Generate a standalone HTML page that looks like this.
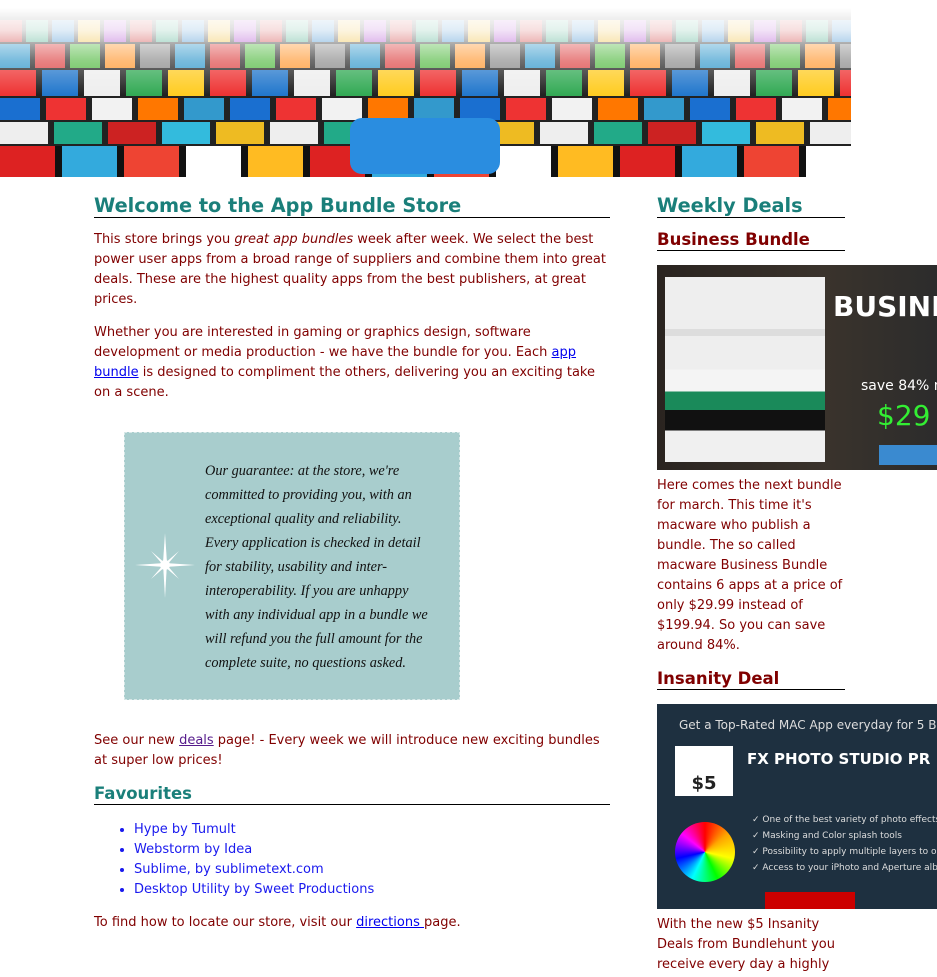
<!DOCTYPE html>
<html><head><meta charset="utf-8"><style>
body{margin:0;background:#fff;font-family:"DejaVu Sans","Liberation Sans",sans-serif;font-size:13px;line-height:20px;color:#800000;width:937px;height:977px;overflow:hidden;position:relative}
.banner{position:absolute;left:0;top:0;width:851px;height:177px;overflow:hidden;background:#222}
.row{position:absolute;left:0;width:851px}
.fade{position:absolute;left:0;top:0;width:851px;height:177px;background:linear-gradient(#fff 0,#fff 8px,rgba(255,255,255,.85) 30px,rgba(255,255,255,.35) 60px,rgba(255,255,255,0) 95px)}
h1{position:absolute;margin:0;font-size:19.3px;font-weight:bold;color:#1a7f7a;border-bottom:1px solid #000;line-height:22px}
h2{position:absolute;margin:0;font-size:16.5px;font-weight:bold;color:#800000;border-bottom:1px solid #000;line-height:21px}
p{position:absolute;margin:0;left:94px;width:518px}
a{color:#0000ee}
.box{position:absolute;left:124px;top:432px;width:334px;height:266px;background:#a8cdcd;border:1px dashed #d8e8e8}
.box div{position:absolute;left:80px;top:26px;width:260px;font-family:"Liberation Serif",serif;font-style:italic;font-size:14.3px;line-height:24px;color:#111;white-space:nowrap}
ul{position:absolute;left:94px;top:820px;margin:0;padding-left:40px;color:#1a1aee}
li{line-height:20px}
.side{left:657px;width:188px}
</style></head><body>
<div class="banner">
<div class="row" style="top:20px;height:22px;background:repeating-linear-gradient(90deg,#c33 0 22px,#333 22px 26px,#4a8 26px 48px,#333 48px 52px,#38c 52px 74px,#333 74px 78px,#eb3 78px 100px,#333 100px 104px,#a4c 104px 126px,#333 126px 130px)"></div>
<div class="row" style="top:44px;height:24px;background:repeating-linear-gradient(90deg,#39c 0 30px,#222 30px 35px,#d44 35px 65px,#222 65px 70px,#5b4 70px 100px,#222 100px 105px,#f93 105px 135px,#222 135px 140px,#888 140px 170px,#222 170px 175px)"></div>
<div class="row" style="top:70px;height:26px;background:repeating-linear-gradient(90deg,#e33 0 36px,#222 36px 42px,#27c 42px 78px,#222 78px 84px,#eee 84px 120px,#222 120px 126px,#3a5 126px 162px,#222 162px 168px,#fc2 168px 204px,#222 204px 210px)"></div>
<div class="row" style="top:98px;height:22px;background:repeating-linear-gradient(90deg,#1a6fd0 0 40px,#222 40px 46px,#e33 46px 86px,#222 86px 92px,#f2f2f2 92px 132px,#222 132px 138px,#f70 138px 178px,#222 178px 184px,#39c 184px 224px,#222 224px 230px)"></div>
<div class="row" style="top:122px;height:22px;background:repeating-linear-gradient(90deg,#eee 0 48px,#222 48px 54px,#2a8 54px 102px,#222 102px 108px,#c22 108px 156px,#222 156px 162px,#3bd 162px 210px,#222 210px 216px,#eb2 216px 264px,#222 264px 270px)"></div>
<div class="row" style="top:146px;height:31px;background:repeating-linear-gradient(90deg,#d22 0 55px,#111 55px 62px,#3ad 62px 117px,#111 117px 124px,#e43 124px 179px,#111 179px 186px,#fff 186px 241px,#111 241px 248px,#fb2 248px 303px,#111 303px 310px)"></div>
<div style="position:absolute;left:350px;top:118px;width:150px;height:56px;border-radius:12px;background:#2a8de0"></div>
<div class="fade"></div>
</div>

<h1 style="left:94px;top:195px;width:516px">Welcome to the App Bundle Store</h1>
<p style="top:230px">This store brings you <i>great app bundles</i> week after week. We select the best power user apps from a broad range of suppliers and combine them into great deals. These are the highest quality apps from the best publishers, at great prices.</p>
<p style="top:323px">Whether you are interested in gaming or graphics design, software development or media production - we have the bundle for you. Each <a href="#">app bundle</a> is designed to compliment the others, delivering you an exciting take on a scene.</p>
<div class="box">
<svg style="position:absolute;left:10px;top:100px" width="60" height="65" viewBox="0 0 60 65"><g fill="#fff"><polygon points="30,0 32,30 30,65 28,30"/><polygon points="0,32 30,30 60,32 30,34"/><polygon points="16,18 31,31 44,46 29,33"/><polygon points="44,18 31,33 16,46 29,31"/><circle cx="30" cy="32" r="5"/></g></svg>
<div>Our guarantee: at the store, we're<br>committed to providing you, with an<br>exceptional quality and reliability.<br>Every application is checked in detail<br>for stability, usability and inter-<br>interoperability. If you are unhappy<br>with any individual app in a bundle we<br>will refund you the full amount for the<br>complete suite, no questions asked.</div>
</div>
<p style="top:731px">See our new <a href="#" style="color:#551a8b">deals</a> page! - Every week we will introduce new exciting bundles at super low prices!</p>
<h1 style="left:94px;top:783px;width:516px;font-size:16.5px;line-height:21px">Favourites</h1>
<ul><li>Hype by Tumult</li><li>Webstorm by Idea</li><li>Sublime, by sublimetext.com</li><li>Desktop Utility by Sweet Productions</li></ul>
<p style="top:913px">To find how to locate our store, visit our <a href="#">directions </a>page.</p>

<h1 style="left:657px;top:195px;width:188px">Weekly Deals</h1>
<h2 style="left:657px;top:229px;width:188px">Business Bundle</h2>
<div style="position:absolute;left:657px;top:265px;width:280px;height:205px;background:linear-gradient(90deg,#2a2420,#3a332c 60%,#2c2c2c);overflow:hidden">
<div style="position:absolute;left:8px;top:12px;width:160px;height:185px;background:linear-gradient(#eee 0 28%,#ddd 28% 32%,#eee 32% 50%,#f4f4f4 50% 62%,#1a8a5a 62% 72%,#111 72% 83%,#f0f0f0 83%)"></div>
<div style="position:absolute;left:176px;top:26px;color:#fff;font-weight:bold;font-size:28px;line-height:32px">BUSINE</div>
<div style="position:absolute;left:204px;top:111px;color:#fff;font-size:14px;white-space:nowrap">save 84% n</div>
<div style="position:absolute;left:220px;top:141px;color:#3e3;font-size:28px">$29</div>
<div style="position:absolute;left:222px;top:180px;width:60px;height:20px;background:#3a8ad0"></div>
</div>
<p class="side" style="top:476px">Here comes the next bundle for march. This time it's macware who publish a bundle. The so called macware Business Bundle contains 6 apps at a price of only $29.99 instead of $199.94. So you can save around 84%.</p>
<h2 style="left:657px;top:668px;width:188px">Insanity Deal</h2>
<div style="position:absolute;left:657px;top:704px;width:280px;height:205px;background:#1e3040;color:#fff;font-size:12px;overflow:hidden;line-height:14px">
<div style="position:absolute;left:22px;top:14px;color:#ddd;font-size:12px;white-space:nowrap">Get a Top-Rated MAC App everyday for 5 Bu</div>
<div style="position:absolute;left:18px;top:42px;width:58px;height:50px;background:#fff;color:#222;font-weight:bold;font-size:18px;line-height:76px;text-align:center">$5</div>
<div style="position:absolute;left:90px;top:48px;font-weight:bold;font-size:15px;white-space:nowrap">FX PHOTO STUDIO PR</div>
<div style="position:absolute;left:18px;top:118px;width:60px;height:60px;border-radius:50%;background:conic-gradient(red,orange,yellow,lime,cyan,blue,magenta,red)"></div>
<div style="position:absolute;left:95px;top:108px;font-size:9px;line-height:16px;color:#ddd;white-space:nowrap">✓ One of the best variety of photo effects<br>✓ Masking and Color splash tools<br>✓ Possibility to apply multiple layers to one<br>✓ Access to your iPhoto and Aperture album</div>
<div style="position:absolute;left:108px;top:188px;width:90px;height:17px;background:#c00"></div>
</div>
<p class="side" style="top:915px">With the new $5 Insanity Deals from Bundlehunt you receive every day a highly</p>
</body></html>
